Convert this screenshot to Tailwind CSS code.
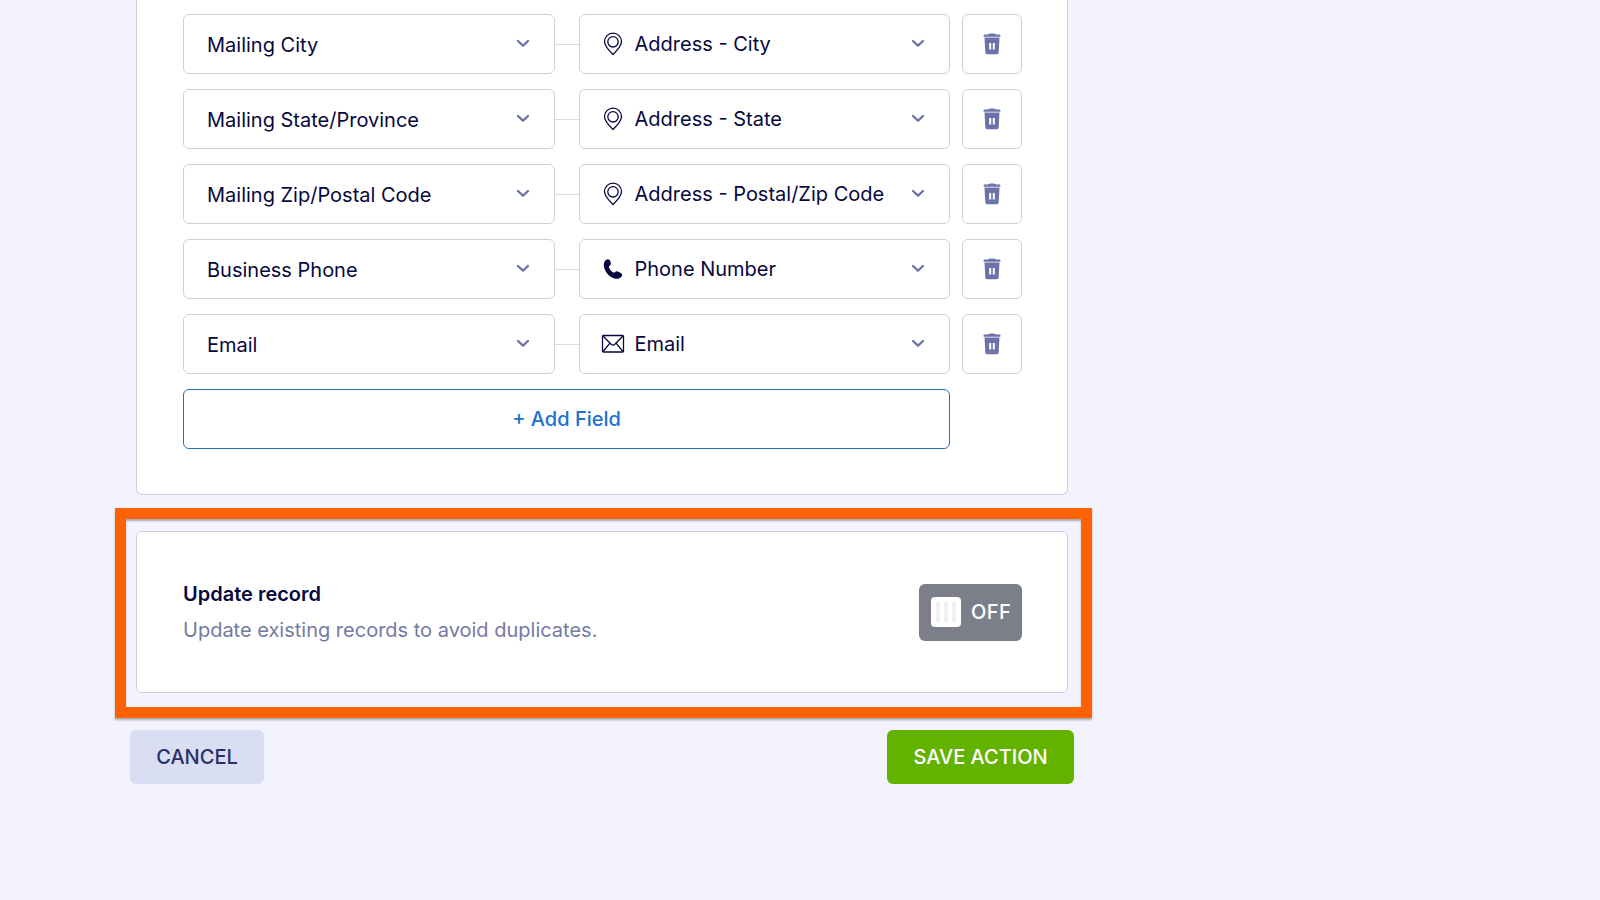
<!DOCTYPE html>
<html lang="en">
<head>
  <meta charset="UTF-8" />
  <meta name="viewport" content="width=device-width, initial-scale=1" />
  <title>Action Settings</title>
  <script src="https://cdn.jsdelivr.net/npm/@tailwindcss/browser@4"></script>
</head>

<body class="min-h-screen bg-[#f3f3fe] font-['Inter','Liberation_Sans',sans-serif] text-xl text-[#07083d]">
  <!-- Shared icons -->
  <svg class="hidden" aria-hidden="true">
    <symbol id="chevron" viewBox="0 0 14 9">
      <path d="M2 2l5 4.700L12 2" fill="none" stroke="currentColor" stroke-width="2.300" stroke-linecap="round" stroke-linejoin="round" />
    </symbol>
    <symbol id="pin" viewBox="0 0 22 24">
      <path d="M11 22.500C9 20.500 2.500 14.800 2.500 9.600a8.500 8.500 0 0 1 17 0c0 5.200-6.500 10.900-8.500 12.900z" fill="none" stroke="currentColor" stroke-width="1.300" stroke-linejoin="round" />
      <circle cx="11" cy="9.800" r="5.200" fill="none" stroke="currentColor" stroke-width="1.300" />
    </symbol>
    <symbol id="phone" viewBox="0 0 22 24">
      <path d="M3.600 3.200c1.200-1.200 3.200-1.500 4.200 0 .9 1.500 1.400 3 .9 4.300-.3.900-1.900 1.600-1.800 2.500.2 1.700 2.900 5 4.800 5.600 1 .3 1.700-1.300 2.800-1.400 1.500-.1 4.100 1.400 5.400 2.800.9 1-.1 2.700-1.400 3.700-1.700 1.300-4.300 1.500-6.700.6C6.800 19.300 3 14.900 2 9.900c-.5-2.600-.2-5 1.600-6.700z" fill="currentColor" />
    </symbol>
    <symbol id="mail" viewBox="0 0 24 24">
      <g fill="none" stroke="currentColor" stroke-width="1.300" stroke-linejoin="round">
        <rect x="1.500" y="3.500" width="21" height="16.500" rx="1" />
        <path d="M2 4l8.200 8.300c1.300 1.200 2.300 1.200 3.600 0L22 4M2 19.500l7-8.300M22 19.500l-7-8.300" />
      </g>
    </symbol>
    <symbol id="trash" viewBox="0 0 18 22">
      <path d="M1.300 1.400h3.500C5.700.8 7 .4 9 .4s3.300.4 4.200 1h3.500c.4 0 .7.300.7.700v1.700H.6V2.100c0-.4.300-.7.700-.7z" fill="currentColor" />
      <path fill-rule="evenodd" d="M1.500 4.500h15l-.8 14.700c-.1 1.400-.9 2.100-2.200 2.100h-9c-1.300 0-2.100-.7-2.200-2.100L1.500 4.500zm4.700 5.500v6.500h2V10h-2zm3.600 0v6.500h2V10h-2z" fill="currentColor" />
    </symbol>
  </svg>

  <main class="w-full max-w-[1092px] pl-[115px]">
    <!-- Field mapping -->
    <section class="ml-[21px] mr-6 flex flex-col gap-[15px] rounded-b-md border border-t-0 border-[#cfd0e4] bg-white pt-[14px] pr-[45px] pb-[45px] pl-[46px]">
      <div class="flex items-center">
        <div class="relative min-w-0 flex-1">
          <select aria-label="Form field 1" class="h-[60px] w-full appearance-none rounded-md border border-[#cfd0de] bg-white pt-0.5 pr-14 pl-[23px]">
            <option>Mailing City</option>
          </select>
          <svg class="pointer-events-none absolute top-[25px] right-[25px] h-[9px] w-[14px] text-[#6c73a8]"><use href="#chevron" /></svg>
        </div>
        <span class="h-px w-6 bg-[#d9dae8]"></span>
        <div class="relative min-w-0 flex-1">
          <svg class="pointer-events-none absolute top-[18px] left-[23px] h-6 w-[22px]"><use href="#pin" /></svg>
          <select aria-label="Source field 1" class="h-[60px] w-full appearance-none rounded-md border border-[#cfd0de] bg-transparent pr-14 pl-[55px]">
            <option>Address - City</option>
          </select>
          <svg class="pointer-events-none absolute top-[25px] right-[25px] h-[9px] w-[14px] text-[#6c73a8]"><use href="#chevron" /></svg>
        </div>
        <button type="button" aria-label="Delete field 1" class="ml-3 flex size-[60px] items-center justify-center rounded-md border border-[#cfd0de] text-[#6c73a8]">
          <svg class="h-[22px] w-[18px]"><use href="#trash" /></svg>
        </button>
      </div>

      <div class="flex items-center">
        <div class="relative min-w-0 flex-1">
          <select aria-label="Form field 2" class="h-[60px] w-full appearance-none rounded-md border border-[#cfd0de] bg-white pt-0.5 pr-14 pl-[23px]">
            <option>Mailing State/Province</option>
          </select>
          <svg class="pointer-events-none absolute top-[25px] right-[25px] h-[9px] w-[14px] text-[#6c73a8]"><use href="#chevron" /></svg>
        </div>
        <span class="h-px w-6 bg-[#d9dae8]"></span>
        <div class="relative min-w-0 flex-1">
          <svg class="pointer-events-none absolute top-[18px] left-[23px] h-6 w-[22px]"><use href="#pin" /></svg>
          <select aria-label="Source field 2" class="h-[60px] w-full appearance-none rounded-md border border-[#cfd0de] bg-transparent pr-14 pl-[55px]">
            <option>Address - State</option>
          </select>
          <svg class="pointer-events-none absolute top-[25px] right-[25px] h-[9px] w-[14px] text-[#6c73a8]"><use href="#chevron" /></svg>
        </div>
        <button type="button" aria-label="Delete field 2" class="ml-3 flex size-[60px] items-center justify-center rounded-md border border-[#cfd0de] text-[#6c73a8]">
          <svg class="h-[22px] w-[18px]"><use href="#trash" /></svg>
        </button>
      </div>

      <div class="flex items-center">
        <div class="relative min-w-0 flex-1">
          <select aria-label="Form field 3" class="h-[60px] w-full appearance-none rounded-md border border-[#cfd0de] bg-white pt-0.5 pr-14 pl-[23px]">
            <option>Mailing Zip/Postal Code</option>
          </select>
          <svg class="pointer-events-none absolute top-[25px] right-[25px] h-[9px] w-[14px] text-[#6c73a8]"><use href="#chevron" /></svg>
        </div>
        <span class="h-px w-6 bg-[#d9dae8]"></span>
        <div class="relative min-w-0 flex-1">
          <svg class="pointer-events-none absolute top-[18px] left-[23px] h-6 w-[22px]"><use href="#pin" /></svg>
          <select aria-label="Source field 3" class="h-[60px] w-full appearance-none rounded-md border border-[#cfd0de] bg-transparent pr-14 pl-[55px]">
            <option>Address - Postal/Zip Code</option>
          </select>
          <svg class="pointer-events-none absolute top-[25px] right-[25px] h-[9px] w-[14px] text-[#6c73a8]"><use href="#chevron" /></svg>
        </div>
        <button type="button" aria-label="Delete field 3" class="ml-3 flex size-[60px] items-center justify-center rounded-md border border-[#cfd0de] text-[#6c73a8]">
          <svg class="h-[22px] w-[18px]"><use href="#trash" /></svg>
        </button>
      </div>

      <div class="flex items-center">
        <div class="relative min-w-0 flex-1">
          <select aria-label="Form field 4" class="h-[60px] w-full appearance-none rounded-md border border-[#cfd0de] bg-white pt-0.5 pr-14 pl-[23px]">
            <option>Business Phone</option>
          </select>
          <svg class="pointer-events-none absolute top-[25px] right-[25px] h-[9px] w-[14px] text-[#6c73a8]"><use href="#chevron" /></svg>
        </div>
        <span class="h-px w-6 bg-[#d9dae8]"></span>
        <div class="relative min-w-0 flex-1">
          <svg class="pointer-events-none absolute top-[18px] left-[23px] h-6 w-[22px]"><use href="#phone" /></svg>
          <select aria-label="Source field 4" class="h-[60px] w-full appearance-none rounded-md border border-[#cfd0de] bg-transparent pr-14 pl-[55px]">
            <option>Phone Number</option>
          </select>
          <svg class="pointer-events-none absolute top-[25px] right-[25px] h-[9px] w-[14px] text-[#6c73a8]"><use href="#chevron" /></svg>
        </div>
        <button type="button" aria-label="Delete field 4" class="ml-3 flex size-[60px] items-center justify-center rounded-md border border-[#cfd0de] text-[#6c73a8]">
          <svg class="h-[22px] w-[18px]"><use href="#trash" /></svg>
        </button>
      </div>

      <div class="flex items-center">
        <div class="relative min-w-0 flex-1">
          <select aria-label="Form field 5" class="h-[60px] w-full appearance-none rounded-md border border-[#cfd0de] bg-white pt-0.5 pr-14 pl-[23px]">
            <option>Email</option>
          </select>
          <svg class="pointer-events-none absolute top-[25px] right-[25px] h-[9px] w-[14px] text-[#6c73a8]"><use href="#chevron" /></svg>
        </div>
        <span class="h-px w-6 bg-[#d9dae8]"></span>
        <div class="relative min-w-0 flex-1">
          <svg class="pointer-events-none absolute top-[18px] left-[22px] size-6"><use href="#mail" /></svg>
          <select aria-label="Source field 5" class="h-[60px] w-full appearance-none rounded-md border border-[#cfd0de] bg-transparent pr-14 pl-[55px]">
            <option>Email</option>
          </select>
          <svg class="pointer-events-none absolute top-[25px] right-[25px] h-[9px] w-[14px] text-[#6c73a8]"><use href="#chevron" /></svg>
        </div>
        <button type="button" aria-label="Delete field 5" class="ml-3 flex size-[60px] items-center justify-center rounded-md border border-[#cfd0de] text-[#6c73a8]">
          <svg class="h-[22px] w-[18px]"><use href="#trash" /></svg>
        </button>
      </div>

      <button type="button" class="mr-[72px] h-[60px] rounded-md border border-[#2a6fae] font-medium text-[#2170cc]">+ Add Field</button>
    </section>

    <!-- Update record, highlighted -->
    <div class="mt-[13px] border-11 border-[#ff6105] pt-3 pr-[13px] pb-[14px] pl-[10px] shadow-[0_2px_2px_rgb(0_0_0/0.3),inset_0_2px_2px_rgb(0_0_0/0.3)]">
      <section class="flex h-[162px] items-center justify-between rounded-md border border-[#cfd0e4] bg-white pr-[45px] pl-[46px]">
        <div>
          <h2 id="update-title" class="leading-9 font-semibold">Update record</h2>
          <p class="leading-9 text-[#757aa3]">Update existing records to avoid duplicates.</p>
        </div>
        <label class="flex h-[57px] w-[103px] items-center gap-[10px] rounded-md bg-[#7c7f89] pl-3 text-white">
          <input type="checkbox" class="sr-only" aria-labelledby="update-title" />
          <span class="flex size-[30px] items-center justify-center gap-1 rounded-sm bg-white">
            <span class="h-5 w-1 bg-[#f1f1f1]"></span>
            <span class="h-5 w-1 bg-[#f1f1f1]"></span>
            <span class="h-5 w-1 bg-[#f1f1f1]"></span>
          </span>
          <span class="font-medium tracking-wide">OFF</span>
        </label>
      </section>
    </div>

    <footer class="mt-3 mr-[18px] ml-[15px] flex justify-between">
      <button type="button" class="h-[54px] w-[134px] rounded-md bg-[#dadef3] font-medium text-[#2b2f68]">CANCEL</button>
      <button type="button" class="h-[54px] w-[187px] rounded-md bg-[#64b200] font-medium text-white">SAVE ACTION</button>
    </footer>
  </main>
</body>
</html>
